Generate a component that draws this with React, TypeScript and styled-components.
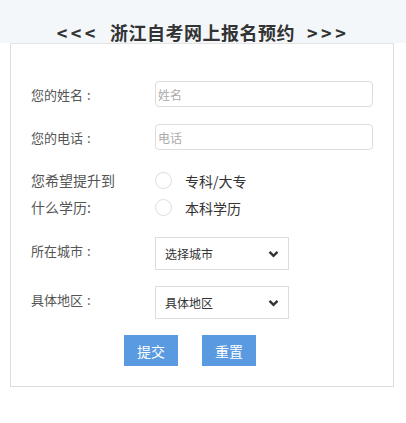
import { createGlobalStyle, styled } from "styled-components";

const GlobalStyle = createGlobalStyle`
  body {
    margin: 0;
    background: #fff;
    font-family: "Microsoft YaHei", "Noto Sans CJK SC", "Noto Sans", sans-serif;
  }
`;

const ChevronSvg = () => (
  <svg width="11" height="8" viewBox="0 0 11 8">
    <path d="M1.5 1.8 L5.5 5.8 L9.5 1.8" fill="none" stroke="#333" strokeWidth="2.4" />
  </svg>
);

const App = () => {
  return (
    <>
      <GlobalStyle />
      <Header>
        <Title>
          <Arrows $side="left">{"<<<"}</Arrows>
          浙江自考网上报名预约
          <Arrows $side="right">{">>>"}</Arrows>
        </Title>
      </Header>
      <Card>
        <Row>
          <Label>
            您的姓名<Colon>:</Colon>
          </Label>
          <TextInput placeholder="姓名" />
        </Row>
        <Row>
          <Label>
            您的电话<Colon>:</Colon>
          </Label>
          <TextInput placeholder="电话" />
        </Row>
        <Row>
          <Label $size={14}>您希望提升到什么学历:</Label>
          <RadioList>
            <RadioItem>
              <Radio />
              <span>专科/大专</span>
            </RadioItem>
            <RadioItem>
              <Radio />
              <span>本科学历</span>
            </RadioItem>
          </RadioList>
        </Row>
        <Row>
          <Label>
            所在城市<Colon>:</Colon>
          </Label>
          <SelectBox>
            <Select defaultValue="">
              <option value="">选择城市</option>
            </Select>
            <Arrow>
              <ChevronSvg />
            </Arrow>
          </SelectBox>
        </Row>
        <Row>
          <Label>
            具体地区<Colon>:</Colon>
          </Label>
          <SelectBox>
            <Select defaultValue="">
              <option value="">具体地区</option>
            </Select>
            <Arrow>
              <ChevronSvg />
            </Arrow>
          </SelectBox>
        </Row>
        <Buttons>
          <Button>提交</Button>
          <Button>重置</Button>
        </Buttons>
      </Card>
    </>
  );
};

export default App;

const Header = styled.div`
  height: 43px;
  background-color: #f4f7fa;
  display: flex;
  align-items: flex-end;
  justify-content: center;
`;

const Title = styled.h1`
  margin: 0;
  font-size: 18px;
  font-weight: 700;
  line-height: 22px;
  letter-spacing: 0.5px;
  color: #333;
  white-space: nowrap;
`;

const Arrows = styled.span<{ $side: "left" | "right" }>`
  letter-spacing: 3.5px;
  margin: ${({ $side }) => ($side === "left" ? "0 11px 0 0" : "0 0 0 12px")};
`;

const Card = styled.div`
  box-sizing: border-box;
  width: 384px;
  margin-left: 10px;
  padding: 37px 20px 20px 20px;
  border: 1px solid #ddd;
  border-top-color: #e4e4e4;
  display: flex;
  flex-direction: column;
  gap: 16px;
`;

const Row = styled.div`
  display: grid;
  grid-template-columns: 124px 1fr;
  align-items: start;
`;

const Label = styled.div<{ $size?: number }>`
  max-width: 90px;
  font-size: ${({ $size }) => $size ?? 13}px;
  line-height: 27px;
  color: #555;
`;

const Colon = styled.span`
  margin-left: 4px;
`;

const TextInput = styled.input`
  box-sizing: border-box;
  width: 218px;
  height: 26px;
  margin-bottom: 1px;
  padding: 0 2px;
  border: 1px solid #ddd;
  border-radius: 4px;
  font-family: inherit;
  font-size: 12px;
  color: #333;
  outline: none;

  &::placeholder {
    color: #aaa;
  }
`;

const RadioList = styled.div`
  display: flex;
  flex-direction: column;
`;

const RadioItem = styled.label`
  display: flex;
  align-items: center;
  gap: 13px;
  height: 27px;
  font-size: 14px;
  color: #333;
`;

const Radio = styled.span`
  box-sizing: border-box;
  width: 17px;
  height: 17px;
  border: 1px solid #ddd;
  border-radius: 50%;
`;

const SelectBox = styled.div`
  position: relative;
  width: 134px;
  height: 33px;
`;

const Select = styled.select`
  box-sizing: border-box;
  width: 100%;
  height: 100%;
  padding: 0 0 0 9px;
  border: 1px solid #ddd;
  border-radius: 0;
  background: #fff;
  appearance: none;
  font-family: inherit;
  font-size: 12px;
  color: #333;
  outline: none;
`;

const Arrow = styled.span`
  position: absolute;
  right: 10px;
  top: 13px;
  display: flex;
  pointer-events: none;
`;

const Buttons = styled.div`
  display: flex;
  gap: 24px;
  padding-left: 93px;
`;

const Button = styled.button`
  width: 54px;
  height: 31px;
  border: none;
  background-color: #5a9ae0;
  color: #fff;
  font-family: inherit;
  font-size: 14px;
  cursor: pointer;
`;
